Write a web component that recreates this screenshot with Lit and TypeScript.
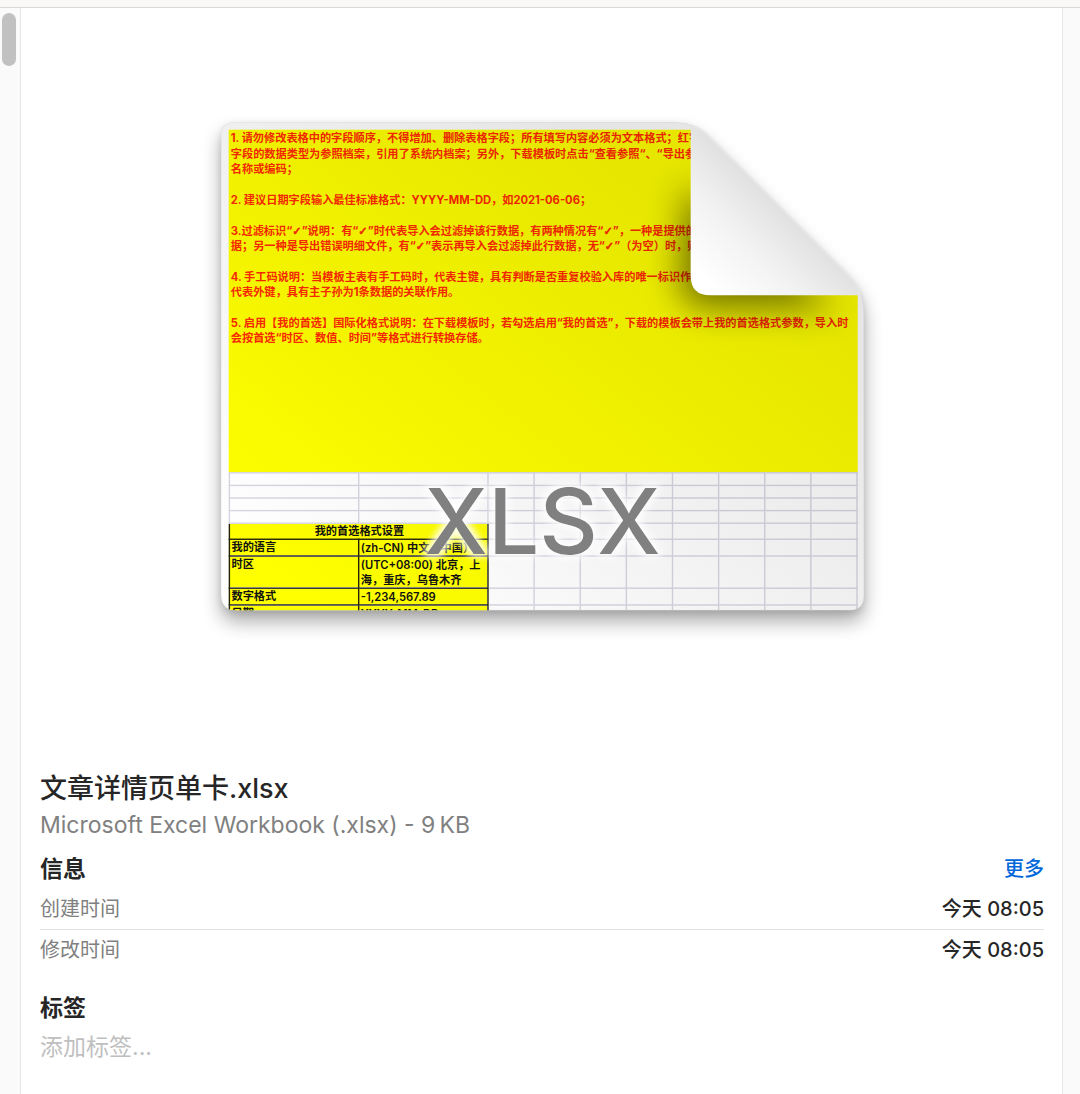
import { LitElement, html, css } from "lit";
import { customElement } from "lit/decorators.js";

const SHEET =
  "M20 0 H644 C666 0 681 5 696 19 L900 222 C913 235 920 250 920 274 V678 Q920 699 899 699 H23 Q0 699 0 676 V20 Q0 0 20 0Z";
const FLAP = "M672 0 H920 V248 H700 Q672 248 672 220Z";
const FLAP_EDGE = "M673 5 C682 8 689 12 696 19 L900 222 C907 229 912 237 915 247";
const FLAP_SHADOW = "M666 90 L880 266 H700 Q656 266 656 226Z";

const NOTES = [
  ["1. 请勿修改表格中的字段顺序，不得增加、删除表格字段；所有填写内容必须为文本格式；红字", "字段的数据类型为参照档案，引用了系统内档案；另外，下载模板时点击“查看参照“、“导出参", "名称或编码；"],
  ["2. 建议日期字段输入最佳标准格式：YYYY-MM-DD，如2021-06-06；"],
  ["3.过滤标识“✓”说明：有“✓”时代表导入会过滤掉该行数据，有两种情况有“✓”，一种是提供的", "据；另一种是导出错误明细文件，有“✓”表示再导入会过滤掉此行数据，无“✓”（为空）时，则"],
  ["4. 手工码说明：当模板主表有手工码时，代表主键，具有判断是否重复校验入库的唯一标识作用", "代表外键，具有主子孙为1条数据的关联作用。"],
  ["5. 启用【我的首选】国际化格式说明：在下载模板时，若勾选启用“我的首选”，下载的模板会带上我的首选格式参数，导入时", "会按首选“时区、数值、时间”等格式进行转换存储。"],
];

const SETTINGS = [
  { name: "我的语言", value: ["(zh-CN) 中文（中国）"] },
  { name: "时区", value: ["(UTC+08:00) 北京，上", "海，重庆，乌鲁木齐"] },
  { name: "数字格式", value: ["-1,234,567.89"] },
  { name: "日期", value: ["YYYY-MM-DD"] },
];

const marks = (text: string) =>
  text.split(/(✓)/).map((t) => (t === "✓" ? html`<span class="check">✓</span>` : t));
const lines = (list: string[]) => list.map((l) => html`<span class="line">${marks(l)}</span>`);
const blanks = (n: number) => Array.from({ length: n }, () => html`<td></td>`);

@customElement("file-thumbnail")
class FileThumbnail extends LitElement {
  static styles = css`
    :host { display: block; }
    svg { display: block; width: 100%; height: auto; overflow: visible; }
    .sheet {
      box-sizing: border-box; height: 700px; padding: 11px 9px 0 11px;
      background: #fff; color: #111; text-spacing-trim: space-all;
      font: 600 16px/22px Inter, "Noto Sans CJK SC", sans-serif;
    }
    .notes {
      box-sizing: border-box; height: 490px; padding: 1px 0 0 3px; overflow: hidden;
      background: #ff0; color: #ff2a00; font-weight: 700;
    }
    .notes p { margin: 0 0 22px; }
    .line { display: block; white-space: nowrap; }
    .check {
      font-family: "DejaVu Sans", sans-serif; font-style: italic; line-height: 16px;
      -webkit-text-stroke: 1px #ff2a00;
    }
    table { width: 900px; table-layout: fixed; border-collapse: collapse; }
    .wide { width: 185px; }
    td, th {
      box-sizing: border-box; height: 23px; padding: 0 0 0 2px; border: 2px solid #d6d6e2;
      line-height: 21px; font-weight: 600; text-align: left; vertical-align: top; overflow: hidden;
    }
    td .line { line-height: 22px; }
    .thin td { height: 18px; }
    .filled { background: #ff0; border-color: #222200; }
    .filled.title { text-align: center; }
    .ext { font: 500 130px Inter, sans-serif; fill: #808080; }
  `;

  render() {
    return html`
      <svg viewBox="0 0 920 700" role="img" aria-label="XLSX">
        <defs>
          <clipPath id="page"><path d=${SHEET} /></clipPath>
          <linearGradient id="shade" x1="0.1" y1="0.95" x2="0.8" y2="0.25">
            <stop offset="0" stop-color="#000" stop-opacity="0" />
            <stop offset="1" stop-color="#000" stop-opacity="0.1" />
          </linearGradient>
          <linearGradient id="curl" gradientUnits="userSpaceOnUse" x1="700" y1="235" x2="808" y2="125">
            <stop offset="0" stop-color="#fff" />
            <stop offset="0.5" stop-color="#f3f3f3" />
            <stop offset="1" stop-color="#e0e0e0" />
          </linearGradient>
          <filter id="soft" x="-20%" y="-20%" width="140%" height="150%"><feGaussianBlur stdDeviation="14" /></filter>
          <filter id="tight" x="-20%" y="-20%" width="140%" height="150%"><feGaussianBlur stdDeviation="5" /></filter>
          <filter id="fold" x="-60%" y="-60%" width="220%" height="220%"><feGaussianBlur stdDeviation="24" /></filter>
          <filter id="glow" x="-10%" y="-20%" width="120%" height="140%">
            <feMorphology in="SourceAlpha" operator="dilate" radius="4" />
            <feGaussianBlur stdDeviation="5" result="halo" />
            <feFlood flood-color="#fff" flood-opacity="0.9" />
            <feComposite in2="halo" operator="in" result="white" />
            <feMerge><feMergeNode in="white" /><feMergeNode in="SourceGraphic" /></feMerge>
          </filter>
        </defs>
        <path d=${SHEET} fill="#000" opacity="0.32" transform="translate(0 16)" filter="url(#soft)" />
        <path d=${SHEET} fill="#000" opacity="0.1" transform="translate(0 4)" filter="url(#tight)" />
        <g clip-path="url(#page)">
          <foreignObject width="920" height="700">
            <div class="sheet">
              <div class="notes">${NOTES.map((n) => html`<p>${lines(n)}</p>`)}</div>
              <table>
                <colgroup><col class="wide" /><col class="wide" /><col span="8" /></colgroup>
                <tbody>
                  ${[0, 1, 2, 3].map(() => html`<tr class="thin">${blanks(10)}</tr>`)}
                  <tr><th class="filled title" colspan="2">我的首选格式设置</th>${blanks(8)}</tr>
                  ${SETTINGS.map((s) => html`<tr>
                    <th class="filled">${s.name}</th>
                    <td class="filled">${lines(s.value)}</td>
                    ${blanks(8)}
                  </tr>`)}
                </tbody>
              </table>
            </div>
          </foreignObject>
          <rect width="920" height="700" fill="url(#shade)" />
          <path d=${FLAP_SHADOW} fill="#000" opacity="0.5" filter="url(#fold)" />
          <path d=${FLAP} fill="url(#curl)" />
          <path d=${SHEET} fill="none" stroke="#000" stroke-opacity="0.05" stroke-width="2" />
        </g>
        <path d=${FLAP_EDGE} fill="none" stroke="#e6e6e6" stroke-width="3" />
        <text class="ext" x="460" y="618" text-anchor="middle" filter="url(#glow)">XLSX</text>
      </svg>
    `;
  }
}

@customElement("app-root")
class AppRoot extends LitElement {
  static styles = css`
    :host {
      display: flex; flex-direction: column; min-height: 100vh;
      background: #fafafa; color: #262626;
      font: 20px/24px Inter, "Noto Sans CJK SC", sans-serif;
    }
    .bar { height: 7px; background: #f9f8f7; border-bottom: 1px solid #d9d9d9; }
    .body { flex: 1; display: flex; }
    .rail { flex: none; padding: 5px 4px 0 2px; }
    .thumb { height: 53px; width: 14px; border-radius: 7px; background: #c1c1c1; }
    .panel {
      flex: 1; min-width: 0; margin-right: 17px; padding: 0 18px 0 19px;
      background: #fff; border: solid #e6e6e6; border-width: 0 1px;
    }
    .preview { padding: 114px 180px 158px 181px; }
    h1, h2, dl, dd, dt, p { margin: 0; }
    h1 { font-size: 27px; line-height: 40px; font-weight: 500; }
    .kind { font-size: 23px; line-height: 32px; color: #808080; }
    .head { display: flex; justify-content: space-between; align-items: center; margin-top: 8px; }
    h2 { font-size: 23px; line-height: 40px; font-weight: 700; }
    a { color: #0068da; text-decoration: none; font-weight: 500; }
    .row { display: flex; justify-content: space-between; align-items: center; height: 40px; }
    .row + .row { border-top: 1px solid #e3e3e3; }
    dt { color: #808080; }
    dd { font-weight: 500; }
    .tags { display: block; margin-top: 18px; }
    .tags label { display: block; font-size: 23px; line-height: 40px; font-weight: 700; }
    input {
      display: block; width: 100%; height: 38px; padding: 0; border: 0; outline: 0; background: none;
      font: 23px/38px Inter, "Noto Sans CJK SC", sans-serif; color: #262626;
    }
    input::placeholder { color: #bfbfbf; opacity: 1; }
  `;

  render() {
    return html`
      <div class="bar"></div>
      <div class="body">
        <div class="rail"><div class="thumb"></div></div>
        <main class="panel">
          <div class="preview"><file-thumbnail></file-thumbnail></div>
          <h1>文章详情页单卡.xlsx</h1>
          <p class="kind">Microsoft Excel Workbook (.xlsx) - 9\u2009KB</p>
          <div class="head"><h2>信息</h2><a href="#more">更多</a></div>
          <dl>
            <div class="row"><dt>创建时间</dt><dd>今天 08:05</dd></div>
            <div class="row"><dt>修改时间</dt><dd>今天 08:05</dd></div>
          </dl>
          <div class="tags">
            <label for="tags">标签</label>
            <input id="tags" type="text" placeholder="添加标签..." />
          </div>
        </main>
      </div>
    `;
  }
}
